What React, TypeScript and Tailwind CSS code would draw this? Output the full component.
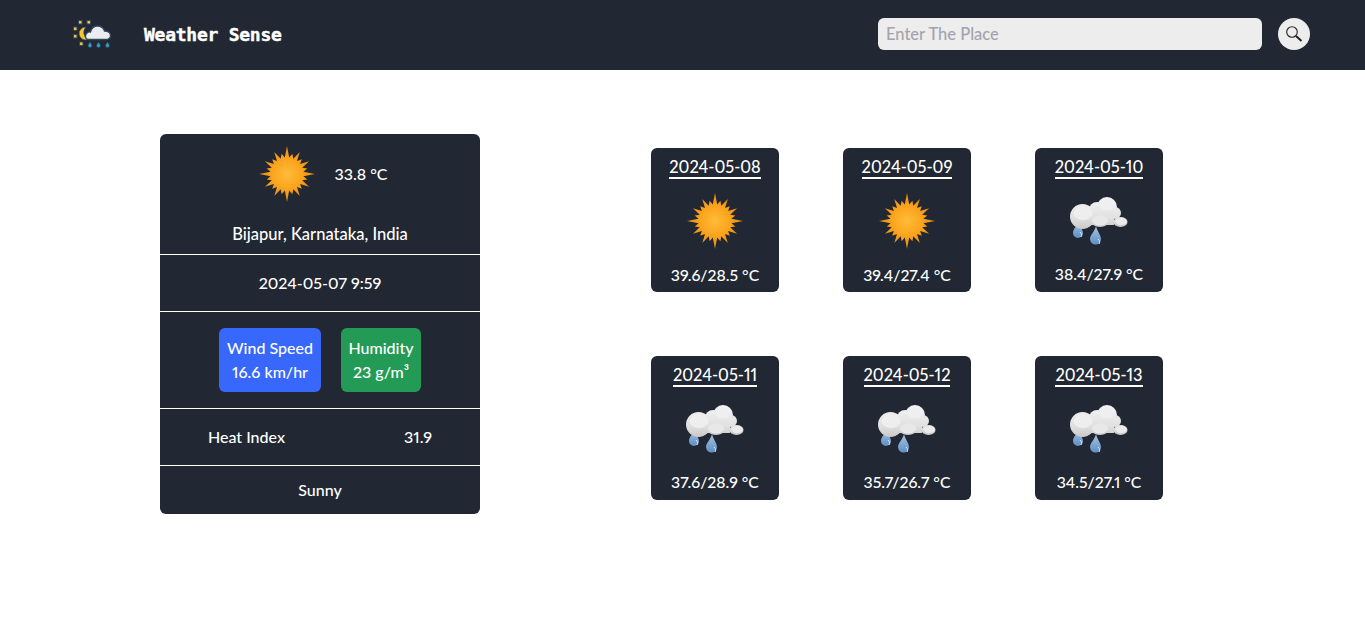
import { useId } from 'react';

const days = [
  { date: '2024-05-08', temp: '39.6/28.5 °C', icon: 'sun' },
  { date: '2024-05-09', temp: '39.4/27.4 °C', icon: 'sun' },
  { date: '2024-05-10', temp: '38.4/27.9 °C', icon: 'rain' },
  { date: '2024-05-11', temp: '37.6/28.9 °C', icon: 'rain' },
  { date: '2024-05-12', temp: '35.7/26.7 °C', icon: 'rain' },
  { date: '2024-05-13', temp: '34.5/27.1 °C', icon: 'rain' },
];

// 24 spikes: long on the axes, medium and short ones between
function sunPoints() {
  const pts: string[] = [];
  const n = 24;
  for (let i = 0; i < n * 2; i++) {
    const a = (i * Math.PI) / n - Math.PI / 2;
    let r = 16.5;
    if (i % 2 === 0) {
      const k = i / 2;
      r = k % 6 === 0 ? 28 : k % 2 === 0 ? 25.5 : 21;
    }
    pts.push(`${(28 + r * Math.cos(a)).toFixed(1)},${(28 + r * Math.sin(a)).toFixed(1)}`);
  }
  return pts.join(' ');
}

function Sun() {
  const id = useId();
  return (
    <svg width="56" height="56" viewBox="0 0 56 56">
      <defs>
        <radialGradient id={id} cx="50%" cy="50%" r="50%">
          <stop offset="0" stopColor="#ffbc3a" />
          <stop offset="0.55" stopColor="#fba31c" />
          <stop offset="1" stopColor="#e98a10" />
        </radialGradient>
      </defs>
      <polygon points={sunPoints()} fill={`url(#${id})`} />
    </svg>
  );
}

function RainCloud() {
  const id = useId();
  const dropId = useId();
  return (
    <svg width="60" height="50" viewBox="0 0 60 50">
      <defs>
        <linearGradient id={id} gradientUnits="userSpaceOnUse" x1="0" y1="0" x2="0" y2="33">
          <stop offset="0" stopColor="#f4f4f4" />
          <stop offset="0.65" stopColor="#e0e0e0" />
          <stop offset="1" stopColor="#c6c6c6" />
        </linearGradient>
        <linearGradient id={dropId} x1="0" y1="0" x2="0" y2="1">
          <stop offset="0" stopColor="#a8c4e0" />
          <stop offset="1" stopColor="#5f8fc4" />
        </linearGradient>
      </defs>
      <path d="M8 24c1 5 5 8 5 12a5 5 0 0 1-10 0c0-4 4-7 5-12z" fill={`url(#${dropId})`} />
      <path d="M26 29c1 5 5 9 5 13a5.500 5.500 0 0 1-11 0c0-4 5-8 6-13z" fill={`url(#${dropId})`} />
      <path d="M10 35c2 2 2 3 1 5M28 42c2 2 2 3 1 5" stroke="#e4eef8" strokeWidth="1" fill="none" />
      <g fill={`url(#${id})`}>
        <circle cx="12.500" cy="19.500" r="12.500" />
        <circle cx="37" cy="10" r="10" />
        <circle cx="27" cy="13" r="8" />
        <circle cx="45" cy="16" r="6" />
        <ellipse cx="30" cy="24" rx="9" ry="6" />
        <ellipse cx="50.500" cy="25" rx="7" ry="5" />
        <rect x="12" y="12" width="32" height="16" />
      </g>
      <ellipse cx="30" cy="23.500" rx="8" ry="5" fill="#e8e8e8" />
      <ellipse cx="51" cy="24.500" rx="5.500" ry="3.500" fill="#ebebeb" />
      <ellipse cx="13" cy="16" rx="9.500" ry="7" fill="#eeeeee" />
      <ellipse cx="37" cy="8" rx="7.500" ry="5.500" fill="#efefef" />
    </svg>
  );
}

function Logo() {
  return (
    <svg width="40" height="30" viewBox="0 0 40 30">
      <g fill="#f3c53c" stroke="#34465a" strokeWidth="1">
        <rect x="6.500" y="1.500" width="3.500" height="3.500" />
        <rect x="15" y="1.500" width="3.500" height="3.500" />
        <rect x="1.500" y="8" width="3.500" height="3.500" />
        <rect x="1.500" y="15.500" width="3.500" height="3.500" />
        <rect x="7.500" y="23" width="3.500" height="3.500" />
      </g>
      <path d="M14 8a6.500 6.500 0 1 0 2 12.500A8 8 0 0 1 14 8z" fill="#f5c431" stroke="#34465a" strokeWidth="0.800" />
      <path
        d="M13.500 17.500c0-3 2.500-5 5-4.500 1-4 4-6 7-6 3.500 0 6 2 7 5 3.500 0 6 2 6 4.500s-2 4-5 4H17c-2.500 0-3.500-1.500-3.500-3z"
        fill="#e9edf2"
        stroke="#34465a"
        strokeWidth="1.300"
      />
      <g fill="#27a6c8" stroke="#34465a" strokeWidth="0.800">
        <path d="M18 23l1.700 2.700a1.900 1.900 0 1 1-3.400 0z" />
        <path d="M26.500 23l1.700 2.700a1.900 1.900 0 1 1-3.400 0z" />
        <path d="M35.500 23l1.700 2.700a1.900 1.900 0 1 1-3.400 0z" />
      </g>
    </svg>
  );
}

function ForecastCard({ date, temp, icon }: { date: string; temp: string; icon: string }) {
  return (
    <div className="flex h-[144px] w-[128px] flex-col items-center rounded-md bg-[#212833] pt-[9px] text-white">
      <div className="border-b-2 border-white text-[16.4px] leading-5 font-medium proportional-nums">{date}</div>
      {icon === 'sun' ? (
        <div className="flex h-[86px] w-full items-center justify-center pb-[2px]">
          <Sun />
        </div>
      ) : (
        <div className="flex h-[85px] w-full items-center justify-center pl-[2px]">
          <RainCloud />
        </div>
      )}
      <div className="text-[15.8px] leading-5 font-medium proportional-nums">{temp}</div>
    </div>
  );
}

export default function App() {
  return (
    <div className="h-[626px] bg-white font-['Lato','Noto_Sans',sans-serif]">
      <header className="flex h-[70px] items-center justify-between bg-[#212833] pr-[55px] pb-[2px] pl-[72px]">
        <div className="flex items-center gap-[32px]">
          <Logo />
          <h1 className="font-['DejaVu_Sans_Mono',monospace] text-[18px] font-bold tracking-[-0.25px] text-white [-webkit-text-stroke:0.4px_white]">
            Weather Sense
          </h1>
        </div>
        <div className="flex items-center gap-4">
          <input
            placeholder="Enter The Place"
            className="h-8 w-[384px] rounded-md bg-[#ededed] px-2 text-[16.5px] font-medium outline-none placeholder:text-[#a3a3ae]"
          />
          <button className="flex h-8 w-8 items-center justify-center rounded-full bg-[#ededed]">
            <svg width="18" height="18" viewBox="0 0 18 18" fill="none" stroke="#222">
              <circle cx="7" cy="7" r="5.300" strokeWidth="1.100" />
              <path d="M11 11l5.500 5" strokeWidth="2" />
            </svg>
          </button>
        </div>
      </header>

      <main className="flex items-start pt-16 pl-[160px]">
        <section className="w-[320px] overflow-hidden rounded-md bg-[#212833] text-[16px] font-medium text-white proportional-nums">
          <div className="h-[121px] border-b border-white">
            <div className="flex h-[80px] items-center justify-center gap-[20px] pl-[6px]">
              <Sun />
              <span>33.8 °C</span>
            </div>
            <p className="mt-[8px] text-center text-[16.5px] leading-6">Bijapur, Karnataka, India</p>
          </div>
          <div className="flex h-[57px] items-center justify-center border-b border-white">2024-05-07 9:59</div>
          <div className="flex h-[97px] items-center justify-center gap-5 border-b border-white">
            <div className="flex h-16 w-[102px] flex-col items-center justify-center rounded-md bg-[#3867fb] leading-[24px]">
              <span>Wind Speed</span>
              <span>16.6 km/hr</span>
            </div>
            <div className="flex h-16 w-[80px] flex-col items-center justify-center rounded-md bg-[#239b56] leading-[24px]">
              <span>Humidity</span>
              <span>23 g/m³</span>
            </div>
          </div>
          <div className="flex h-[57px] items-center justify-between border-b border-white px-[48px]">
            <span>Heat Index</span>
            <span>31.9</span>
          </div>
          <div className="flex h-[48px] items-center justify-center">Sunny</div>
        </section>

        <section className="mt-[14px] ml-[171px] grid grid-cols-3 gap-16">
          {days.map((d) => (
            <ForecastCard key={d.date} {...d} />
          ))}
        </section>
      </main>
    </div>
  );
}
